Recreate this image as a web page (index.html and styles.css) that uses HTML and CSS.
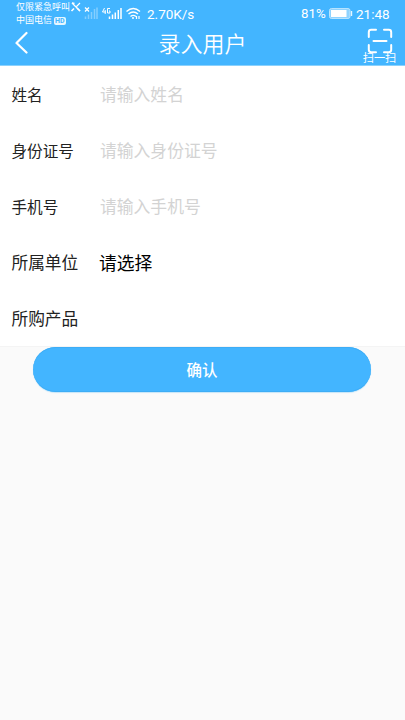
FILE: index.html
```html
<!DOCTYPE html>
<html lang="zh-CN">
<head>
<meta charset="utf-8">
<title>录入用户</title>
<link rel="stylesheet" href="styles.css">
</head>
<body>
<header class="top">
  <div class="status">
    <div class="carriers">
      <div class="carrier">仅限紧急呼叫</div>
      <div class="carrier">中国电信<span class="hd">HD</span></div>
    </div>
    <svg class="signals" width="74" height="28" viewBox="0 0 74 28" fill="none" stroke="#fff">
      <g stroke-width="1.2"><path d="M2 3L10 11M10 3L6.500 6.500"/><path d="M1.500 11L4 8.500M2 3l2.500.5M7 8l3 3" stroke-width="1.600"/></g>
      <path d="M15 7.500l4 4M19 7.500l-4 4" stroke-width="1.300"/>
      <path d="M15.500 19v-2.500M18.500 19v-4.500M21.500 19v-7M24.500 19V9M27 19V7.500" stroke-width="1.500" opacity=".35"/>
      <path d="M34.500 8l-2 4h3.500M35.200 10v4M40 8.500h-2.500v4.500H40v-2h-1" stroke-width="1"/>
      <path d="M39.500 19v-2.500M42.500 19v-4.500M45.300 19v-6.500M48.300 19V10M51 19V8" stroke-width="1.500"/>
      <path d="M56.500 11.500q6.700-6 13.500 0M58.500 14q4.700-4 9.500 0M60.500 16.500q2.700-2.300 5.500 0" stroke-width="1.400"/>
      <circle cx="63" cy="18" r="1" fill="#fff" stroke="none"/>
      <path d="M66.500 16v3M69 16v3" stroke-width="1.200"/>
    </svg>
    <span class="speed">2.70K/s</span>
    <span class="percent">81%</span>
    <svg class="battery" width="24" height="11" viewBox="0 0 24 11">
      <rect x=".5" y=".5" width="20.500" height="10" rx="2" fill="#8fd3ff" stroke="#b8e4ff"/>
      <rect x="2" y="2" width="15.500" height="7" fill="#fff"/>
      <path d="M22.500 3v5" stroke="#e5f6ff" stroke-width="1.400"/>
    </svg>
    <span class="clock">21:48</span>
  </div>
  <div class="nav">
    <svg class="back" width="14" height="24" viewBox="0 0 14 24" fill="none" stroke="#fff" stroke-width="2.200" stroke-linecap="round" stroke-linejoin="round"><path d="M11.500 2L1.500 12L11.500 21.500"/></svg>
    <h1 class="title">录入用户</h1>
    <div class="scan">
      <svg width="26" height="26" viewBox="0 0 26 26" fill="none" stroke="#fff" stroke-width="2" stroke-linecap="round"><path d="M1.800 9V4.200q0-2.400 2.400-2.400H9M17 1.800h4.800q2.400 0 2.400 2.400V9M24.200 17v4.800q0 2.400-2.400 2.400H17M9 24.200H4.200q-2.400 0-2.400-2.400V17M6.500 13h13"/></svg>
      <span class="scan-label">扫一扫</span>
    </div>
  </div>
</header>
<main>
  <div class="form">
    <div class="row"><span class="label small">姓名</span><span class="hint">请输入姓名</span></div>
    <div class="row"><span class="label small">身份证号</span><span class="hint">请输入身份证号</span></div>
    <div class="row"><span class="label small">手机号</span><span class="hint">请输入手机号</span></div>
    <div class="row"><span class="label">所属单位</span><span class="select">请选择</span></div>
    <div class="row"><span class="label">所购产品</span></div>
  </div>
  <button class="confirm">确认</button>
</main>
</body>
</html>
```
FILE: styles.css
```css
* { box-sizing: border-box; }
body {
  margin: 0;
  height: 720px;
  overflow: hidden;
  background: #fafafa;
  color: #222;
  font-family: Roboto, "Noto Sans CJK SC", sans-serif;
}
.top {
  height: 66px;
  background: #43b5ff;
  color: #fff;
  border-bottom: 1px solid #8bd1fc;
}
.status {
  display: flex;
  height: 28px;
  padding-left: 16px;
}
.carriers { width: 54px; padding-top: 1px; }
.carrier {
  height: 13px;
  line-height: 13px;
  font-size: 9px;
  white-space: nowrap;
  display: flex;
  align-items: center;
}
.hd {
  margin-left: 2px;
  padding: 0 1px;
  height: 8px;
  line-height: 8px;
  border-radius: 2px;
  background: #e5f6ff;
  color: #43b5ff;
  font-size: 7px;
  font-weight: 700;
}
.signals { flex: none; }
.speed, .percent, .clock { line-height: 28px; white-space: nowrap; }
.speed { margin-left: 3px; width: 154px; font-size: 13.5px; }
.percent { width: 28px; font-size: 13.3px; }
.battery { margin-top: 8px; flex: none; }
.clock { margin-left: 3px; font-size: 13.5px; }
.nav {
  display: grid;
  grid-template-columns: 60px 1fr 60px;
  height: 37px;
}
.back { margin: 3px 0 0 15px; }
.title {
  margin: 0;
  text-align: center;
  font-size: 22px;
  line-height: 33px;
  font-weight: 350;
}
.scan {
  display: flex;
  flex-direction: column;
  align-items: center;
  padding-left: 9px;
}
.scan svg { flex: none; margin-bottom: -2px; }
.scan-label { font-size: 11.2px; line-height: 13px; }
.form {
  height: 281px;
  background: #fff;
  border-bottom: 1px solid #f4f4f4;
}
.row {
  display: flex;
  align-items: center;
  height: 56.2px;
  padding: 0 0 1px 11.5px;
}
.label { width: 87.5px; font-size: 16.7px; }
.small { font-size: 15.6px; }
.hint { padding: 1px 0 0 1px; font-size: 16.8px; color: #d3d3d3; }
.select { font-size: 17.8px; color: #000; }
.confirm {
  display: block;
  width: 338px;
  height: 45px;
  margin: -0.5px 0 0 33px;
  padding: 0;
  border: 0;
  border-radius: 23px;
  background: #43b5ff;
  box-shadow: inset 0 1px #3dadf6, inset 0 -1px #3dadf6, 0 1px 1px #c5e5f8;
  color: #fff;
  font: 500 15.5px Roboto, "Noto Sans CJK SC", sans-serif;
}
```
